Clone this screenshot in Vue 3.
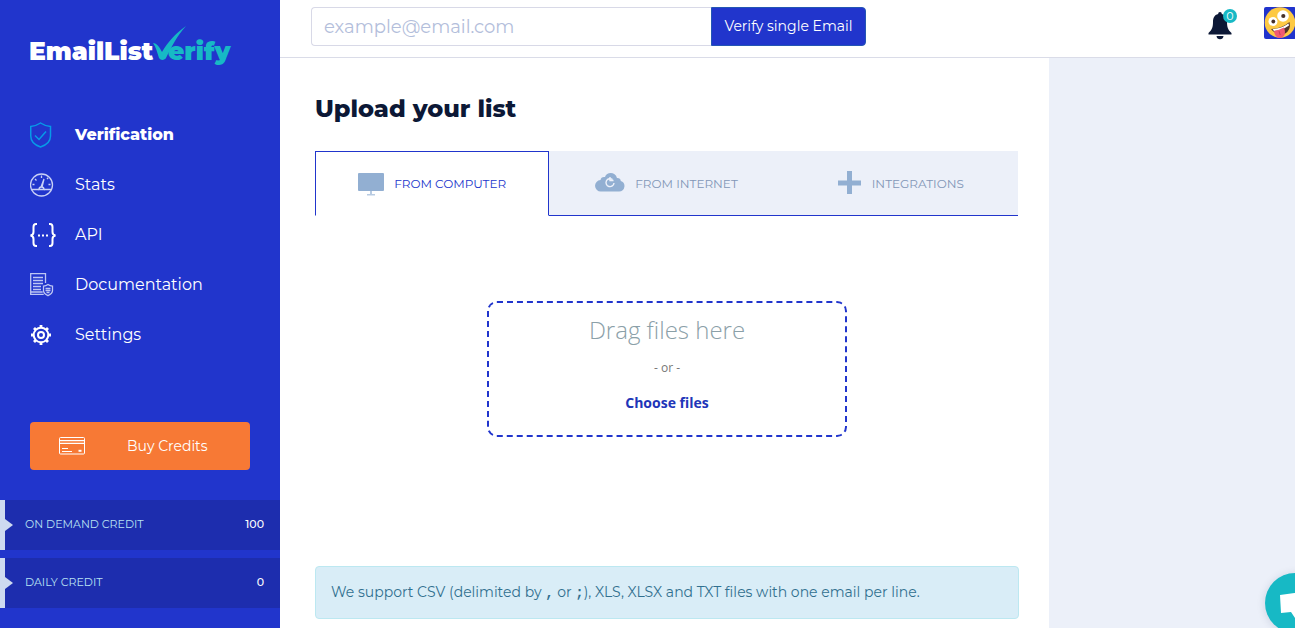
<script setup>
import { ref } from 'vue'

const email = ref('')
const activeTab = ref('computer')
const navItems = [
  { id: 'verification', label: 'Verification', active: true },
  { id: 'stats', label: 'Stats' },
  { id: 'api', label: 'API' },
  { id: 'docs', label: 'Documentation' },
  { id: 'settings', label: 'Settings' },
]
const credits = [
  { label: 'ON DEMAND CREDIT', value: 100 },
  { label: 'DAILY CREDIT', value: 0 },
]
const tabs = [
  { id: 'computer', label: 'FROM COMPUTER' },
  { id: 'internet', label: 'FROM INTERNET' },
  { id: 'integrations', label: 'INTEGRATIONS' },
]
</script>

<template>
  <div class="page">
    <aside class="sidebar">
      <a class="logo" href="#" aria-label="EmailListVerify">
        <svg width="204" height="48" viewBox="0 0 204 48">
          <text class="logo-a" x="-1" y="37">EmailList</text>
          <text class="logo-b" x="138" y="37">erify</text>
          <path d="M123 20c3 0 6 3 9 9 6-10 13-18 24-26-9 10-14 20-20 32-1 2-5 3-7 0-2-6-3-11-6-15z" fill="#17b9c5" />
        </svg>
      </a>

      <nav class="nav">
        <a v-for="item in navItems" :key="item.id" href="#" class="nav-item" :class="{ active: item.active }">
          <svg v-if="item.id === 'verification'" class="nav-icon" viewBox="0 0 28 28" fill="none" stroke="#079ae8" stroke-width="1.5">
            <path d="M10.5 3Q15 6 20.5 6.500V16c0 5-4 9-10 11C4.500 25 .75 21 .75 16V6.500Q6 6 10.500 3z" />
            <path d="M5 15.500l4 4 7-8" />
          </svg>
          <svg v-else-if="item.id === 'stats'" class="nav-icon" viewBox="0 0 28 28" fill="none" stroke="#c9d0f6" stroke-width="1.300">
            <circle cx="11.500" cy="15" r="11" />
            <path d="M1.500 19.500H9M14 19.500h8M11.500 5.500v2.500M5 9l1.500 1.500M17 9l1.200-1.200M2.500 14.500h2M18.500 14.500h2" />
            <path d="M9 19.500a2.500 2.500 0 0 1 5 0zM11 17l3-8M12 17l2-8" />
          </svg>
          <svg v-else-if="item.id === 'api'" class="nav-icon" viewBox="0 0 28 28" fill="none" stroke="#fff" stroke-width="2">
            <path d="M7 4H6Q3.500 4 3.500 7v5q0 3-3 3.500 3 .5 3 3.500v4q0 3 2.500 3h1M19 4h1q2.500 0 2.500 3v5q0 3 3 3.500-3 .5-3 3.500v4q0 3-2.500 3h-1" />
            <path d="M8 15.500h2M12 15.500h2M16 15.500h2" />
          </svg>
          <svg v-else-if="item.id === 'docs'" class="nav-icon" viewBox="0 0 28 28" fill="none" stroke="#bdc6f4" stroke-width="1.300">
            <path d="M15.500 13V3.600H.7v20.800h13" />
            <path d="M.7 22h12M3 7.500h10M3 10.500h10M3 13.500h10M3 16.500h8M3 19.500h8" />
            <path d="M18 14.500q2 1.500 4.500 1.700v4.300q0 3-4.500 5.200-4.500-2.200-4.500-5.200v-4.300q2.500-.2 4.500-1.700zM15.500 18.500h5M15.500 20.500h5M16.500 22.500h3" />
          </svg>
          <svg v-else class="nav-icon" viewBox="0 0 28 28" fill="none" stroke="#fff" stroke-width="2">
            <circle cx="11" cy="15" r="7.300" />
            <circle cx="11" cy="15" r="3" />
            <path stroke-width="2.800" d="M11 5v3M11 22v3M1 15h3M18 15h3M4 8l2 2M16 20l2 2M4 22l2-2M16 10l2-2" />
          </svg>
          <span>{{ item.label }}</span>
        </a>
      </nav>

      <button class="buy" type="button">
        <svg width="26" height="18" viewBox="0 0 26 18" fill="none" stroke="#fff" stroke-width="1">
          <rect x=".5" y=".5" width="25" height="16.500" rx="1" />
          <path d="M1 3.500h24M1 6.500h24M3 11.500h6M3 14.500h10" />
          <path d="M19.500 13.800h3" stroke-width="2" />
          <path d="M1 5h24" opacity=".45" />
        </svg>
        <span>Buy Credits</span>
      </button>

      <dl class="credits">
        <div v-for="credit in credits" :key="credit.label" class="credit">
          <dt>{{ credit.label }}</dt>
          <dd>{{ credit.value }}</dd>
        </div>
      </dl>
    </aside>

    <div class="body">
      <header class="topbar">
        <form class="verify" @submit.prevent>
          <input v-model="email" type="email" placeholder="example@email.com" aria-label="Email address" />
          <button type="submit">Verify single Email</button>
        </form>
        <div class="tools">
          <button class="bell" type="button" aria-label="Notifications">
            <svg width="24" height="28" viewBox="0 0 24 28" fill="#0c1836">
              <path d="M12 0c1.200 0 1.800.8 1.800 2 4 1 5.200 4 5.200 8 0 5 1 8 4.500 11v1.500H.5V21C4 18 5 15 5 10c0-4 1.200-7 5.200-8C10.200.8 10.800 0 12 0z" />
              <path d="M8.500 24h7q-.5 3.300-3.500 3.300T8.500 24z" />
            </svg>
            <span class="badge">0</span>
          </button>
          <button class="avatar" type="button" aria-label="Account">
            <svg width="31" height="32" viewBox="0 0 31 32">
              <rect width="32" height="32" rx="2" fill="#2033cc" />
              <circle cx="16" cy="15.500" r="15.300" fill="#fdc943" />
              <circle cx="19" cy="9" r="5.800" fill="#fff" />
              <circle cx="9" cy="14.500" r="4.500" fill="#fff" />
              <circle cx="19.300" cy="9" r="2.100" fill="#453029" />
              <circle cx="9.300" cy="14.500" r="1.900" fill="#453029" />
              <path d="M7 22q11-.5 18.500-7 2 8-5 12-8 2-13.500-5z" fill="#50332a" />
              <path d="M8.500 22.200q9-.7 16-5.700l.5 2q-7 5-15 5.500z" fill="#fff" />
              <path d="M10 24q5-1 10-3.500 3 8-2.500 10.500-6.500 1-7.500-7z" fill="#f05b72" />
              <path d="M15 24l1.200 4" stroke="#ca3f57" fill="none" />
            </svg>
          </button>
        </div>
      </header>

      <div class="columns">
        <main class="content">
          <h1>Upload your list</h1>

          <div class="tabs" role="tablist">
            <button
              v-for="tab in tabs"
              :key="tab.id"
              type="button"
              role="tab"
              class="tab"
              :class="{ selected: activeTab === tab.id }"
              :aria-selected="activeTab === tab.id"
              @click="activeTab = tab.id"
            >
              <svg v-if="tab.id === 'computer'" width="26" height="24" viewBox="0 0 26 24" fill="#92afd2">
                <rect y="1" width="26" height="18" rx="1" />
                <path d="M12 19h2v3h3v1.500H9V22h3z" opacity=".65" />
              </svg>
              <svg v-else-if="tab.id === 'internet'" width="30" height="24" viewBox="0 0 30 24">
                <path d="M6 20.500a5.700 5.700 0 0 1-.5-11.400q.5-3.600 4.500-3.100C11.500.5 20.500.5 22 7q3.500-.2 3.800 3A5.400 5.400 0 0 1 24 20.500z" fill="#92afd2" />
                <path d="M17.500 8.500A4 4 0 1 0 19 12M15 6v3.500h3.500" fill="none" stroke="#edf1fa" stroke-width="1.400" />
              </svg>
              <svg v-else width="24" height="24" viewBox="0 0 24 24" fill="#92afd2">
                <path d="M9 0h5v9.500h9v5h-9V23H9v-8.500H0v-5h9z" />
              </svg>
              <span>{{ tab.label }}</span>
            </button>
          </div>

          <section class="dropzone" aria-label="File upload">
            <p class="drag">Drag files here</p>
            <p class="or">- or -</p>
            <button type="button">Choose files</button>
          </section>

          <p class="note">
            We support CSV (delimited by <b>,</b> or <b>;</b>), XLS, XLSX and TXT files with one email per line.
          </p>
        </main>
        <div class="rail"></div>
      </div>
    </div>

    <button class="chat" type="button" aria-label="Open chat">
      <svg width="60" height="60" viewBox="0 0 60 60" fill="#fff">
        <path d="M15 22l29-4 2 21-13 1-1 8-6-9-10 1z" />
      </svg>
    </button>
  </div>
</template>

<style>
body {
  overflow-x: hidden;
}
</style>

<style scoped>
* {
  box-sizing: border-box;
}
.page {
  display: flex;
  min-height: 100vh;
  font-family: Montserrat, Inter, sans-serif;
  background: #fff;
}
button,
input {
  font-family: inherit;
  border: 0;
  padding: 0;
  background: none;
}
button {
  cursor: pointer;
}
a {
  color: inherit;
  text-decoration: none;
}
.sidebar {
  flex: 0 0 280px;
  display: flex;
  flex-direction: column;
  background: #2135cc;
  color: #fff;
}
.logo {
  display: block;
  height: 109px;
  padding: 23px 30px 0;
}
.logo svg {
  display: block;
}
.logo-a,
.logo-b {
  font-size: 25px;
  font-weight: 900;
  fill: #fff;
}
.logo-b {
  fill: #17b9c5;
}
.nav-item {
  display: flex;
  align-items: center;
  gap: 17px;
  height: 50px;
  padding-left: 30px;
  font-size: 16px;
}
.nav-item.active {
  font-weight: 800;
}
.nav-icon {
  width: 28px;
  height: 28px;
}
.buy {
  display: flex;
  align-items: center;
  gap: 42px;
  height: 48px;
  margin: 63px 30px 30px;
  padding-left: 29px;
  border-radius: 4px;
  background: #f77935;
  color: #fff;
  font-size: 14px;
}
.credits {
  display: flex;
  flex-direction: column;
  gap: 8px;
  margin: 0;
}
.credit {
  position: relative;
  display: flex;
  justify-content: space-between;
  align-items: center;
  height: 50px;
  padding: 0 16px 2px 20px;
  border-left: 5px solid #cedaf0;
  background: #1d2dae;
  font-size: 11px;
}
.credit::before {
  content: '';
  position: absolute;
  left: 0;
  top: 19px;
  border: 6px solid transparent;
  border-left: 8px solid #cedaf0;
  border-right: 0;
}
.credit dt {
  color: #b9e1f3;
}
.credit dd {
  margin: 0;
  font-weight: 500;
}
.body {
  flex: 1;
  min-width: 0;
  display: flex;
  flex-direction: column;
}
.topbar {
  display: flex;
  justify-content: space-between;
  height: 58px;
  padding: 7px 0 0 31px;
  border-bottom: 1px solid #dadce8;
}
.verify {
  display: flex;
  height: 39px;
}
.verify input {
  width: 400px;
  padding: 0 12px;
  border: 1px solid #d8d9e7;
  border-right: 0;
  border-radius: 4px 0 0 4px;
  font-size: 18px;
  color: #0c1836;
}
.verify input::placeholder {
  color: #b3bedb;
}
.verify button {
  width: 155px;
  padding-bottom: 2px;
  border: 1px solid #2456b5;
  border-radius: 0 4px 4px 0;
  background: #2135cc;
  color: #fff;
  font-size: 14px;
}
.tools {
  display: flex;
  align-items: flex-start;
  gap: 32px;
}
.bell {
  position: relative;
  margin-top: 5px;
}
.bell svg,
.avatar svg,
.chat svg {
  display: block;
}
.badge {
  position: absolute;
  top: -3px;
  right: -5px;
  width: 14px;
  height: 14px;
  border-radius: 50%;
  background: #17b9c5;
  color: #fff;
  font-size: 11px;
  line-height: 14px;
  text-align: center;
}
.columns {
  flex: 1;
  display: flex;
}
.content {
  flex: 1;
  padding: 36px 30px 9px 35px;
}
.rail {
  flex: 0 0 246px;
  background: #ecf0f9;
}
h1 {
  margin: 0 0 27px;
  color: #0c1836;
  font-size: 24px;
  line-height: 30px;
  font-weight: 800;
}
.tabs {
  display: grid;
  grid-template-columns: repeat(3, 1fr);
  height: 65px;
  margin-right: 1px;
}
.tab {
  display: flex;
  align-items: center;
  justify-content: center;
  gap: 10px;
  border-bottom: 1px solid #2135cc;
  background: #ecf0f9;
  color: #8296b7;
  font-size: 12px;
}
.tab.selected {
  border: 1px solid #2135cc;
  border-bottom-color: #fff;
  background: #fff;
  color: #2135cc;
}
.dropzone {
  display: flex;
  flex-direction: column;
  align-items: center;
  width: 360px;
  max-width: 100%;
  height: 136px;
  margin: 85px auto 129px;
  padding-top: 9px;
  border: 2px dashed #2135cc;
  border-radius: 10px;
  font-family: 'Open Sans', sans-serif;
}
.dropzone p {
  margin: 0;
}
.dropzone .drag {
  color: #8ba0a8;
  font-size: 24px;
  line-height: 36px;
  font-weight: 300;
}
.dropzone .or {
  margin: 11px 0 16px;
  color: #777;
  font-size: 12px;
  line-height: 18px;
}
.dropzone button {
  color: #2135b8;
  font-size: 14px;
  line-height: 20px;
  font-weight: 700;
}
.note {
  margin: 0;
  padding: 13px 15px;
  border: 1px solid #bce8f1;
  border-radius: 4px;
  background: #d9edf7;
  color: #31708f;
  font-size: 14px;
  line-height: 25px;
}
.note b {
  font-family: 'Liberation Mono', monospace;
  line-height: 1;
}
.chat {
  position: fixed;
  right: -30px;
  bottom: -5px;
  width: 60px;
  height: 60px;
  border-radius: 50%;
  background: #17b9c5;
  box-shadow: 0 1px 8px rgba(20, 40, 80, 0.15);
}
</style>
